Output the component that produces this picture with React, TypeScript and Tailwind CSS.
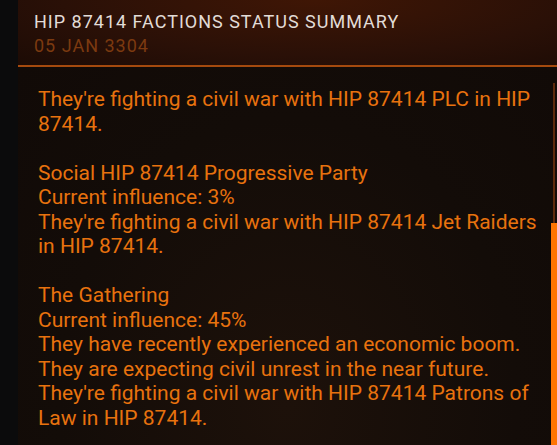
const paragraphs = [
  ["They're fighting a civil war with HIP 87414 PLC in HIP", "87414."],
  [
    "Social HIP 87414 Progressive Party",
    "Current influence: 3%",
    "They're fighting a civil war with HIP 87414 Jet Raiders",
    "in HIP 87414.",
  ],
  [
    "The Gathering",
    "Current influence: 45%",
    "They have recently experienced an economic boom.",
    "They are expecting civil unrest in the near future.",
    "They're fighting a civil war with HIP 87414 Patrons of",
    "Law in HIP 87414.",
  ],
]

export default function App() {
  return (
    <div className="flex h-[445px] w-[557px] overflow-hidden bg-[#0c0b0b] font-['Roboto',sans-serif]">
      {/* left strip */}
      <div className="w-[18px] shrink-0 bg-[#0b0b0c]" />

      <div className="relative flex flex-1 flex-col bg-[radial-gradient(ellipse_at_50%_0%,#3c1606_0%,#1c0c06_45%,#120b08_100%)]">
        {/* header */}
        <div className="border-b-2 border-[#a54a0e] bg-[radial-gradient(ellipse_at_55%_0%,#3f1605_0%,#2a1007_60%,#1c0b05_100%)] pl-4 pt-[10px] pb-[7px]">
          <div className="text-[18px] leading-6 tracking-[1px] text-[#e2dcd7]">
            HIP 87414 FACTIONS STATUS SUMMARY
          </div>
          <div className="text-[18px] leading-6 tracking-[1px] text-[#7c3a10]">05 JAN 3304</div>
        </div>

        {/* body */}
        <div className="flex flex-1 flex-col gap-[24.5px] pl-5 pt-5 text-[21px] leading-[24.5px] text-[#e8720e] bg-[radial-gradient(ellipse_at_50%_90%,#1d110a_0%,#130c08_60%,#110a07_100%)]">
          {paragraphs.map((p, i) => (
            <div key={i}>
              {p.map((line, j) => (
                <div key={j} className="whitespace-nowrap">
                  {line}
                </div>
              ))}
            </div>
          ))}
        </div>

        {/* scrollbar */}
        <div className="absolute right-0 top-[83px] bottom-0 flex w-[6px] flex-col items-center">
          <div className="h-[140px] w-[2px] bg-[#5e2a0d]" />
          <div className="w-[6px] flex-1 bg-[#ff7400]" />
        </div>
      </div>
    </div>
  )
}
